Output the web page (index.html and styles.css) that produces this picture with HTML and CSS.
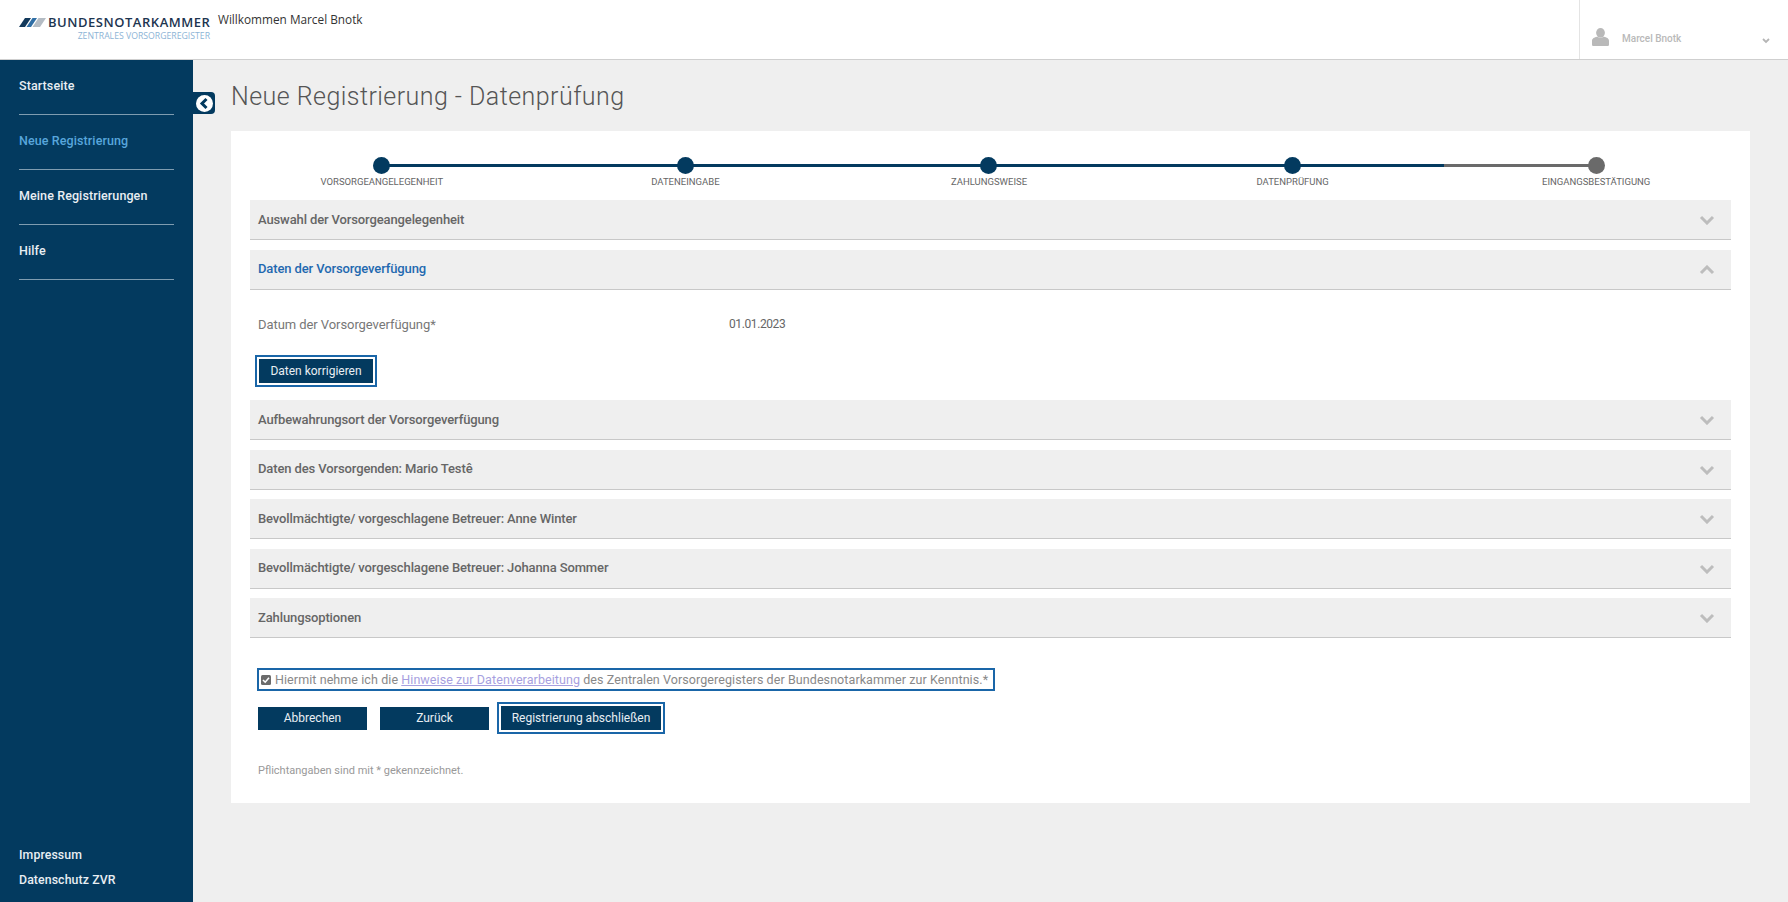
FILE: index.html
```html
<!DOCTYPE html>
<html lang="de">
<head>
<meta charset="utf-8">
<title>Neue Registrierung - Datenprüfung</title>
<link rel="stylesheet" href="styles.css">
</head>
<body>
<header class="topbar">
  <div class="logo">
    <div class="logo-main">
      <svg class="logo-mark" viewBox="0 0 27 9" width="27" height="9" aria-hidden="true">
        <polygon points="0,9 6,0 12,0 6,9" fill="#12395b"/>
        <polygon points="7.5,9 13.5,0 18,0 12,9" fill="#2f6ea5"/>
        <polygon points="13.5,9 19.5,0 27,0 21,9" fill="#b4bcc4"/>
      </svg>
      <span class="logo-name">BUNDESNOTARKAMMER</span>
    </div>
    <div class="logo-sub">ZENTRALES VORSORGEREGISTER</div>
  </div>
  <div class="welcome">Willkommen Marcel Bnotk</div>
  <div class="user">
    <svg class="user-icon" viewBox="0 0 17 18" width="17" height="18" aria-hidden="true">
      <ellipse cx="8.5" cy="4.8" rx="4.4" ry="4.8" fill="#b9b9b9"/>
      <path d="M0 16.5V13c0-2.6 2.4-3.6 5-4.2 1 1 5.900 1 7 0 2.600.6 5 1.600 5 4.200v3.500c0 1-.7 1.500-1.500 1.500h-14C.7 18 0 17.500 0 16.500z" fill="#b9b9b9"/>
    </svg>
    <span class="user-name">Marcel Bnotk</span>
    <svg class="user-caret" viewBox="0 0 8 6" width="8" height="6" aria-hidden="true"><path d="M1 1l3 3 3-3" fill="none" stroke="#b5b5b5" stroke-width="1.800"/></svg>
  </div>
</header>
<div class="shell">
  <aside class="sidebar">
    <nav class="nav">
      <a class="nav-link">Startseite</a>
      <a class="nav-link is-active">Neue Registrierung</a>
      <a class="nav-link">Meine Registrierungen</a>
      <a class="nav-link">Hilfe</a>
    </nav>
    <div class="legal">
      <a>Impressum</a>
      <a>Datenschutz ZVR</a>
    </div>
    <button class="collapse" aria-label="Menü einklappen">
      <svg viewBox="0 0 17 17" width="17" height="17" aria-hidden="true">
        <circle cx="8.500" cy="8.500" r="8.500" fill="#fff"/>
        <path d="M10.500 4L6 8.500l4.500 4.500" fill="none" stroke="#033a5f" stroke-width="3"/>
      </svg>
    </button>
  </aside>
  <main class="main">
    <h1 class="title">Neue Registrierung - Datenprüfung</h1>
    <section class="card">
      <ol class="stepper">
        <li class="step done">VORSORGEANGELEGENHEIT</li>
        <li class="step done">DATENEINGABE</li>
        <li class="step done">ZAHLUNGSWEISE</li>
        <li class="step done half">DATENPRÜFUNG</li>
        <li class="step">EINGANGSBESTÄTIGUNG</li>
      </ol>
      <div class="accordion">
        <div class="acc-head"><span>Auswahl der Vorsorgeangelegenheit</span><svg class="chev" viewBox="0 0 16 10" width="16" height="10"><path d="M2 2l6 6 6-6" fill="none" stroke="#bdbdbd" stroke-width="3"/></svg></div>
        <div class="acc-head is-open"><span>Daten der Vorsorgeverfügung</span><svg class="chev" viewBox="0 0 16 10" width="16" height="10"><path d="M2 8l6-6 6 6" fill="none" stroke="#bdbdbd" stroke-width="3"/></svg></div>
        <div class="acc-body">
          <div class="field"><span class="field-label">Datum der Vorsorgeverfügung*</span><span class="field-value">01.01.2023</span></div>
          <button class="btn focus">Daten korrigieren</button>
        </div>
        <div class="acc-head"><span>Aufbewahrungsort der Vorsorgeverfügung</span><svg class="chev" viewBox="0 0 16 10" width="16" height="10"><path d="M2 2l6 6 6-6" fill="none" stroke="#bdbdbd" stroke-width="3"/></svg></div>
        <div class="acc-head"><span>Daten des Vorsorgenden: Mario Testê</span><svg class="chev" viewBox="0 0 16 10" width="16" height="10"><path d="M2 2l6 6 6-6" fill="none" stroke="#bdbdbd" stroke-width="3"/></svg></div>
        <div class="acc-head"><span>Bevollmächtigte/ vorgeschlagene Betreuer: Anne Winter</span><svg class="chev" viewBox="0 0 16 10" width="16" height="10"><path d="M2 2l6 6 6-6" fill="none" stroke="#bdbdbd" stroke-width="3"/></svg></div>
        <div class="acc-head"><span>Bevollmächtigte/ vorgeschlagene Betreuer: Johanna Sommer</span><svg class="chev" viewBox="0 0 16 10" width="16" height="10"><path d="M2 2l6 6 6-6" fill="none" stroke="#bdbdbd" stroke-width="3"/></svg></div>
        <div class="acc-head"><span>Zahlungsoptionen</span><svg class="chev" viewBox="0 0 16 10" width="16" height="10"><path d="M2 2l6 6 6-6" fill="none" stroke="#bdbdbd" stroke-width="3"/></svg></div>
      </div>
      <label class="consent">
        <svg class="check" viewBox="0 0 10 10" width="10" height="10" aria-hidden="true"><rect width="10" height="10" rx="1.500" fill="#6b6b6b"/><path d="M2 5l2.200 2.200L8 2.800" fill="none" stroke="#fff" stroke-width="1.600"/></svg>
        <span>Hiermit nehme ich die <a class="link">Hinweise zur Datenverarbeitung</a> des Zentralen Vorsorgeregisters der Bundesnotarkammer zur Kenntnis.*</span>
      </label>
      <div class="actions">
        <button class="btn wide">Abbrechen</button>
        <button class="btn wide">Zurück</button>
        <button class="btn focus finish">Registrierung abschließen</button>
      </div>
      <p class="note">Pflichtangaben sind mit * gekennzeichnet.</p>
    </section>
  </main>
</div>
</body>
</html>
```

FILE: styles.css
```css
* { box-sizing: border-box; }
html, body { margin: 0; height: 100%; overflow: hidden; }
body {
  font-family: Roboto, "Noto Sans", sans-serif;
  background: #efefef;
  color: #666;
  display: flex;
  flex-direction: column;
}

/* top bar */
.topbar {
  height: 60px;
  flex: none;
  background: #fff;
  border-bottom: 1px solid #cfcfcf;
  display: flex;
  padding-left: 19px;
}
.logo { padding-top: 16px; width: 199px; flex: none; }
.logo-main { display: flex; align-items: center; gap: 2px; height: 12px; }
.logo-mark { flex: none; }
.logo-name {
  font-family: "Open Sans", sans-serif;
  font-weight: 600;
  font-size: 13px;
  letter-spacing: 0.530px;
  color: #1d3550;
  line-height: 12px;
  white-space: nowrap;
}
.logo-sub {
  font-family: "Open Sans", sans-serif;
  font-size: 8.700px;
  color: #8db4d6;
  line-height: 12px;
  margin-top: 2px;
  width: 191px;
  text-align: right;
  white-space: nowrap;
}
.welcome {
  font-family: "Open Sans", sans-serif;
  font-size: 11.800px;
  color: #333;
  line-height: 18px;
  padding-top: 10px;
  white-space: nowrap;
}
.user {
  margin-left: auto;
  width: 209px;
  border-left: 1px solid #e4e4e4;
  display: flex;
  align-items: center;
  padding: 28px 18px 13px 12px;
}
.user-icon { flex: none; }
.user-name { font-size: 10px; font-weight: 500; color: #b9b9b9; margin-left: 13px; margin-top: 2px; }
.user-caret { margin-left: auto; margin-top: 7px; }

/* frame */
.shell { flex: 1; display: flex; min-height: 0; }
.sidebar {
  position: relative;
  width: 193px;
  flex: none;
  background: #033a5f;
  display: flex;
  flex-direction: column;
  justify-content: space-between;
  padding: 0 19px 9px;
}
.nav { display: flex; flex-direction: column; }
.nav-link {
  height: 55px;
  padding-top: 15px;
  line-height: 22px;
  font-size: 12.500px;
  font-weight: 500;
  letter-spacing: 0.100px;
  color: #e8eef3;
  border-bottom: 1px solid #7f9cb0;
  white-space: nowrap;
}
.nav-link.is-active { color: #58a6dc; }
.legal { display: flex; flex-direction: column; font-size: 12.300px; font-weight: 500; letter-spacing: 0.100px; color: #e8eef3; line-height: 25px; }
.collapse {
  position: absolute;
  top: 32px;
  left: 193px;
  width: 22px;
  height: 22px;
  padding: 0 1px 0 1px;
  border: 0;
  border-radius: 0 4px 4px 0;
  background: #033a5f;
  display: flex;
  align-items: center;
  justify-content: center;
}

/* main */
.main { flex: 1; padding: 0 38px; min-width: 0; }
.title {
  margin: 0;
  height: 71px;
  padding-top: 18px;
  font-size: 25px;
  line-height: 38px;
  font-weight: 300;
  letter-spacing: 0.450px;
  color: #555;
  white-space: nowrap;
}
.card { background: #fff; height: 672px; display: flex; flex-direction: column; }

/* stepper */
.stepper {
  list-style: none;
  margin: 0 2px 0 -1px;
  padding: 26px 0 0;
  height: 69px;
  flex: none;
  display: flex;
}
.step {
  position: relative;
  flex: 1;
  text-align: center;
  padding-top: 17px;
  font-size: 9.500px;
  line-height: 16px;
  color: #666;
  white-space: nowrap;
}
.step::before {
  content: "";
  position: absolute;
  z-index: 2;
  top: 0;
  left: 50%;
  width: 17px;
  height: 17px;
  margin-left: -8.500px;
  border-radius: 50%;
  background: #6a6a6a;
}
.step::after {
  content: "";
  position: absolute;
  top: 7px;
  left: 50%;
  width: 100%;
  height: 3px;
  background: #033a5f;
}
.step:last-child::after { display: none; }
.step.done::before { background: #033a5f; }
.step.half::after { background: linear-gradient(to right, #033a5f 50%, #6a6a6a 50%); }

/* accordion */
.accordion { margin: 0 19px; display: flex; flex-direction: column; gap: 9.500px; }
.acc-head {
  height: 40px;
  flex: none;
  background: #efefef;
  border-bottom: 1px solid #c8c8c8;
  padding: 0 16px 1px 8px;
  display: flex;
  align-items: center;
  justify-content: space-between;
  font-size: 13px;
  font-weight: 500;
  letter-spacing: -0.120px;
  color: #666;
}
.acc-head.is-open { color: #1f69b0; }
.chev { flex: none; margin-top: 2px; }
.acc-body { height: 86.500px; padding: 0 5px; margin-top: 5px; display: flex; flex-direction: column; align-items: flex-start; }
.field { height: 30px; padding-left: 3px; display: flex; align-items: center; font-size: 13px; margin-top: 5px; margin-bottom: 16px; flex: none; }
.field-label { width: 471px; color: #777; letter-spacing: -0.070px; }
.field-value { color: #666; font-size: 12px; letter-spacing: -0.400px; }

/* buttons */
.btn {
  font-family: inherit;
  font-size: 12px;
  color: #e8eef3;
  background: #033a5f;
  border: 0;
  height: 23px;
  padding: 0;
  white-space: nowrap;
  flex: none;
}
.btn.focus {
  width: 122px;
  height: 32px;
  border: 2px solid #1a66a8;
  box-shadow: inset 0 0 0 2px #fff;
  outline: 0;
}
.btn.wide { width: 109px; }
.btn.finish { width: 168px; }

/* consent */
.consent {
  margin: 30px 0 0 26px;
  width: 738px;
  height: 23px;
  border: 2px solid #1a66a8;
  display: flex;
  align-items: center;
  gap: 4px;
  padding-left: 2px;
  font-size: 12.500px;
  letter-spacing: 0.080px;
  color: #888;
  white-space: nowrap;
}
.check { flex: none; }
.link { color: #a79fe0; text-decoration: underline; }
.actions { margin: 11px 0 0 27px; display: flex; align-items: center; gap: 13px; }
.actions .finish { margin-left: -5px; }
.note { margin: 28px 0 0 27px; font-size: 11px; line-height: 18px; color: #999; }
```
